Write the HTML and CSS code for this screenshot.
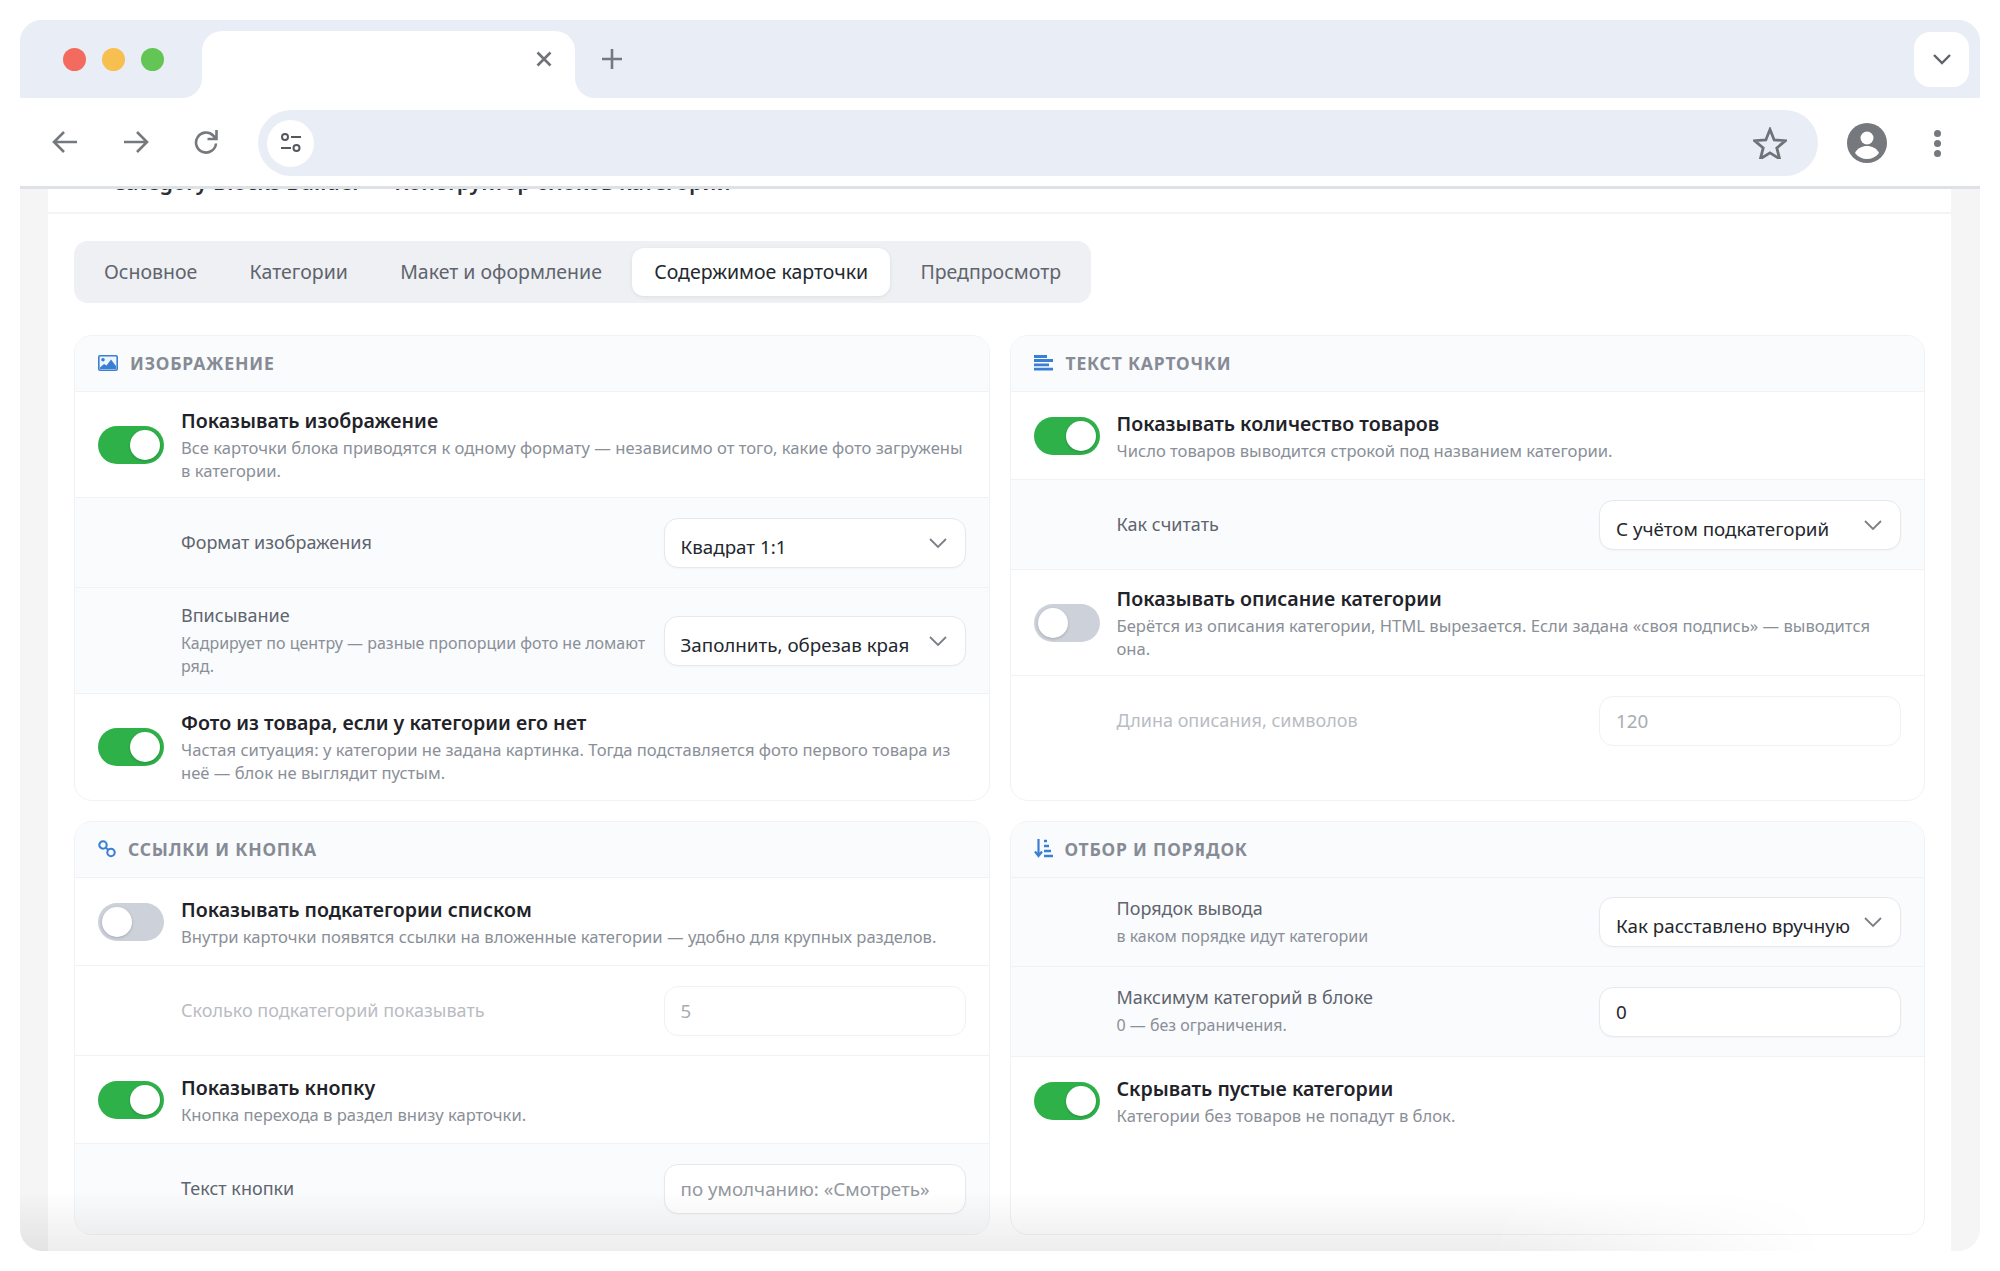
FILE: index.html
```html
<!DOCTYPE html>
<html lang="ru">
<head>
  <meta charset="UTF-8">
  <title>Category Blocks Builder</title>
  <link rel="stylesheet" href="styles.css">
</head>
<body>

  <div class="window">
    <div class="tabstrip">
      <div class="strip-left">
        <span class="dot red"></span>
        <span class="dot yellow"></span>
        <span class="dot green"></span>
      </div>
      <div class="tab">
        <svg class="tab-close" width="16" height="16" viewBox="0 0 16 16"><path d="M1.5 1.5l13 13M14.5 1.5l-13 13" stroke="#6f7277" stroke-width="2.6" fill="none"/></svg>
      </div>
      <div class="strip-right">
        <svg class="tab-plus" width="20" height="20" viewBox="0 0 20 20"><path d="M10 0v20M0 10h20" stroke="#75787d" stroke-width="2.6" fill="none"/></svg>
        <div class="tab-menu">
          <svg width="18" height="11" viewBox="0 0 18 11"><path d="M1 1l8 8 8-8" stroke="#5f6368" stroke-width="2.4" fill="none"/></svg>
        </div>
      </div>
    </div>

    <div class="toolbar">
      <div class="nav-btns">
        <svg width="26" height="24" viewBox="0 0 26 24"><path d="M25 12H3M12 2L2 12l10 10" stroke="#75787d" stroke-width="2.6" fill="none"/></svg>
        <svg width="26" height="24" viewBox="0 0 26 24"><path d="M1 12h22M14 2l10 10-10 10" stroke="#75787d" stroke-width="2.6" fill="none"/></svg>
        <svg class="reload" width="26" height="26" viewBox="0 0 26 26"><path d="M23 14.500a10 10 0 1 1-2.900-8L23 9.500M23.500 1v9h-9" stroke="#75787d" stroke-width="2.600" fill="none"/></svg>
      </div>
      <div class="address">
        <div class="site-info">
          <svg width="22" height="22" viewBox="0 0 22 22"><g stroke="#55585d" stroke-width="2" fill="none"><circle cx="5" cy="5" r="3"/><path d="M11 5h10M1 16h10"/><circle cx="16.5" cy="16" r="3"/></g></svg>
        </div>
        <svg class="star" width="34" height="32" viewBox="0 0 34 32"><path d="M17 2.5l4.2 10.4 11.3.8-8.7 7.2 2.8 10.9L17 25.9 7.4 31.8l2.8-10.9-8.7-7.2 11.3-.8z" stroke="#6f7277" stroke-width="2.8" fill="none"/></svg>
      </div>
      <svg class="avatar" width="40" height="40" viewBox="0 0 40 40"><circle cx="20" cy="20" r="20" fill="#75787d"/><circle cx="20" cy="15" r="6.5" fill="#fff"/><path d="M8 30c2.500-5 7-7 12-7s9.500 2 12 7c-3 4-7.500 6-12 6s-9-2-12-6z" fill="#fff"/></svg>
      <div class="kebab"><span></span><span></span><span></span></div>
    </div>

    <div class="page">
      <div class="page-head">
        <div class="page-title">Category Blocks Builder — Конструктор блоков категории</div>
      </div>

      <div class="page-body">
        <div class="tabs">
          <div class="tab-item">Основное</div>
          <div class="tab-item">Категории</div>
          <div class="tab-item">Макет и оформление</div>
          <div class="tab-item active">Содержимое карточки</div>
          <div class="tab-item">Предпросмотр</div>
        </div>

        <div class="cards">
          <section class="card">
            <div class="card-head">
              <svg width="20" height="16" viewBox="0 0 20 16"><rect x="0.800" y="0.800" width="18.400" height="14.400" rx="1.200" fill="#eef5fd" stroke="#3b7fd4" stroke-width="1.600"/><circle cx="5" cy="4.800" r="1.800" fill="#3b7fd4"/><path d="M2 14v-1.500l4-3.500 2.500 1.500L13 4.500l5 6.500v3z" fill="#3b7fd4"/></svg>
              <span>Изображение</span>
            </div>
            <div class="row">
              <span class="toggle on"></span>
              <div class="row-text">
                <div class="row-title">Показывать изображение</div>
                <div class="row-desc">Все карточки блока приводятся к одному формату — независимо от того, какие фото загружены в категории.</div>
              </div>
            </div>
            <div class="row sub">
              <div class="row-text">
                <div class="row-label">Формат изображения</div>
              </div>
              <div class="select">Квадрат 1:1
                <svg width="18" height="11" viewBox="0 0 18 11"><path d="M1 1l8 8 8-8" stroke="#7b7f86" stroke-width="1.800" fill="none"/></svg>
              </div>
            </div>
            <div class="row sub">
              <div class="row-text">
                <div class="row-label">Вписывание</div>
                <div class="row-desc">Кадрирует по центру — разные пропорции фото не ломают ряд.</div>
              </div>
              <div class="select">Заполнить, обрезав края
                <svg width="18" height="11" viewBox="0 0 18 11"><path d="M1 1l8 8 8-8" stroke="#7b7f86" stroke-width="1.800" fill="none"/></svg>
              </div>
            </div>
            <div class="row">
              <span class="toggle on"></span>
              <div class="row-text">
                <div class="row-title">Фото из товара, если у категории его нет</div>
                <div class="row-desc">Частая ситуация: у категории не задана картинка. Тогда подставляется фото первого товара из неё — блок не выглядит пустым.</div>
              </div>
            </div>
          </section>

          <section class="card">
            <div class="card-head">
              <svg width="20" height="16" viewBox="0 0 20 16"><path d="M0 1.500h13M0 5.500h19M0 9.800h15M0 14.200h19" stroke="#3b7fd4" stroke-width="2.800" fill="none"/></svg>
              <span>Текст карточки</span>
            </div>
            <div class="row">
              <span class="toggle on"></span>
              <div class="row-text">
                <div class="row-title">Показывать количество товаров</div>
                <div class="row-desc">Число товаров выводится строкой под названием категории.</div>
              </div>
            </div>
            <div class="row sub">
              <div class="row-text">
                <div class="row-label">Как считать</div>
              </div>
              <div class="select">С учётом подкатегорий
                <svg width="18" height="11" viewBox="0 0 18 11"><path d="M1 1l8 8 8-8" stroke="#7b7f86" stroke-width="1.800" fill="none"/></svg>
              </div>
            </div>
            <div class="row">
              <span class="toggle"></span>
              <div class="row-text">
                <div class="row-title">Показывать описание категории</div>
                <div class="row-desc">Берётся из описания категории, HTML вырезается. Если задана «своя подпись» — выводится она.</div>
              </div>
            </div>
            <div class="row sub disabled">
              <div class="row-text">
                <div class="row-label">Длина описания, символов</div>
              </div>
              <input class="field" value="120" disabled>
            </div>
          </section>

          <section class="card">
            <div class="card-head">
              <svg width="18" height="18" viewBox="0 0 18 18"><g stroke="#3b7fd4" stroke-width="2.100" fill="none"><circle cx="5" cy="5" r="3.700"/><circle cx="13" cy="12.500" r="3.700"/><path d="M7.500 7.500l3 2.500"/></g></svg>
              <span>Ссылки и кнопка</span>
            </div>
            <div class="row">
              <span class="toggle"></span>
              <div class="row-text">
                <div class="row-title">Показывать подкатегории списком</div>
                <div class="row-desc">Внутри карточки появятся ссылки на вложенные категории — удобно для крупных разделов.</div>
              </div>
            </div>
            <div class="row sub disabled">
              <div class="row-text">
                <div class="row-label">Сколько подкатегорий показывать</div>
              </div>
              <input class="field" value="5" disabled>
            </div>
            <div class="row">
              <span class="toggle on"></span>
              <div class="row-text">
                <div class="row-title">Показывать кнопку</div>
                <div class="row-desc">Кнопка перехода в раздел внизу карточки.</div>
              </div>
            </div>
            <div class="row sub">
              <div class="row-text">
                <div class="row-label">Текст кнопки</div>
              </div>
              <input class="field" placeholder="по умолчанию: «Смотреть»">
            </div>
          </section>

          <section class="card">
            <div class="card-head">
              <svg width="19" height="19" viewBox="0 0 19 19"><path d="M4.500 0v16M1 12.500l3.500 4.500 3.500-4.500" stroke="#3b7fd4" stroke-width="2.200" fill="none"/><path d="M10 2h3M10 7h5M10 12h7M10 17h9" stroke="#3b7fd4" stroke-width="2.400" fill="none"/></svg>
              <span>Отбор и порядок</span>
            </div>
            <div class="row sub">
              <div class="row-text">
                <div class="row-label">Порядок вывода</div>
                <div class="row-desc">в каком порядке идут категории</div>
              </div>
              <div class="select">Как расставлено вручную
                <svg width="18" height="11" viewBox="0 0 18 11"><path d="M1 1l8 8 8-8" stroke="#7b7f86" stroke-width="1.800" fill="none"/></svg>
              </div>
            </div>
            <div class="row sub">
              <div class="row-text">
                <div class="row-label">Максимум категорий в блоке</div>
                <div class="row-desc">0 — без ограничения.</div>
              </div>
              <input class="field" value="0">
            </div>
            <div class="row">
              <span class="toggle on"></span>
              <div class="row-text">
                <div class="row-title">Скрывать пустые категории</div>
                <div class="row-desc">Категории без товаров не попадут в блок.</div>
              </div>
            </div>
          </section>
        </div>
      </div>
    </div>

    <div class="bottom-fade"></div>
  </div>

</body>
</html>
```

FILE: styles.css
```css
* {
  box-sizing: border-box;
}

html, body {
  height: 100%;
}

body {
  margin: 0;
  padding: 20px;
  background: #fff;
  font-family: 'Noto Sans', sans-serif;
  overflow: hidden;
}

.window {
  position: relative;
  height: 1231px;
  display: flex;
  flex-direction: column;
  border-radius: 22px;
  overflow: hidden;
  background: #f5f5f6;
}

/* browser chrome */
.tabstrip {
  display: flex;
  height: 78px;
  flex-shrink: 0;
  background: linear-gradient(#e9edf5 31px, #fff 31px);
}

.strip-left {
  width: 182px;
  display: flex;
  align-items: center;
  gap: 16px;
  padding: 0 0 0 43px;
  background: #e9edf5;
  border-bottom-right-radius: 20px;
}

.dot {
  width: 23px;
  height: 23px;
  border-radius: 50%;
}

.dot.red { background: #f26b5e; }
.dot.yellow { background: #f7bf4f; }
.dot.green { background: #62c554; }

.tab {
  width: 373px;
  margin-top: 11px;
  background: #fff;
  border-radius: 20px 20px 0 0;
  display: flex;
  align-items: center;
  justify-content: flex-end;
  padding: 0 23px 12px 0;
}

.strip-right {
  flex: 1;
  display: flex;
  align-items: center;
  justify-content: space-between;
  padding: 0 11px 0 27px;
  background: #e9edf5;
  border-bottom-left-radius: 20px;
}

.tab-menu {
  width: 55px;
  height: 55px;
  margin-top: 1px;
  background: #fff;
  border-radius: 16px;
  display: flex;
  align-items: center;
  justify-content: center;
}

.toolbar {
  height: 91px;
  flex-shrink: 0;
  display: flex;
  align-items: flex-start;
  background: #fff;
  border-bottom: 3px solid #dfe1e8;
  position: relative;
}

.nav-btns {
  width: 238px;
  height: 88px;
  display: flex;
  align-items: center;
  gap: 45px;
  padding-left: 32px;
}

.reload {
  margin-left: -1px;
}

.address {
  width: 1560px;
  height: 66px;
  margin-top: 12px;
  background: #e9edf5;
  border-radius: 33px;
  display: flex;
  align-items: center;
  justify-content: space-between;
  padding: 0 31px 0 9px;
}

.site-info {
  width: 47px;
  height: 47px;
  background: #fff;
  border-radius: 50%;
  display: flex;
  align-items: center;
  justify-content: center;
}

.avatar {
  margin: 25px 0 0 29px;
}

.kebab {
  margin: 32px 0 0 47px;
  display: flex;
  flex-direction: column;
  gap: 3px;
}

.kebab span {
  width: 7px;
  height: 7px;
  border-radius: 50%;
  background: #75787d;
}

/* page */
.page {
  flex: 1;
  margin: 0 29px 0 28px;
  background: #fff;
  overflow: hidden;
}

.page-head {
  height: 25px;
  overflow: hidden;
  padding-left: 64px;
  border-bottom: 2px solid #f3f4f6;
}

.page-title {
  margin-top: -22px;
  font-size: 21.500px;
  line-height: 30px;
  font-weight: 600;
  color: #2b2f36;
  white-space: nowrap;
}

.page-body {
  padding: 27px 26px 0 26px;
}

.tabs {
  display: inline-flex;
  gap: 8.300px;
  height: 62px;
  padding: 7px 8px;
  margin-bottom: 32px;
  background: #eef0f4;
  border-radius: 14px;
}

.tab-item {
  padding: 0 22px 2px;
  display: flex;
  align-items: center;
  font-size: 19.500px;
  color: #5f646d;
  border-radius: 12px;
}

.tab-item.active {
  background: #fff;
  color: #23272e;
  box-shadow: 0 1px 4px rgba(0, 0, 0, 0.08);
}

.cards {
  display: grid;
  grid-template-columns: 1fr 1fr;
  gap: 20px;
}

.card {
  border: 1px solid #f0f2f5;
  border-radius: 18px;
  overflow: hidden;
  background: #fff;
}

.card-head {
  height: 56px;
  display: flex;
  align-items: center;
  gap: 12px;
  padding: 0 23px 2px;
  background: #f9fbfd;
  border-bottom: 1px solid #f0f2f5;
  font-size: 17.500px;
  font-weight: 700;
  letter-spacing: 0.8px;
  text-transform: uppercase;
  color: #868b95;
}

.row {
  display: flex;
  align-items: center;
  gap: 17px;
  min-height: 88px;
  padding: 15px 23px;
  border-bottom: 1px solid #f0f2f5;
}

.row:last-child {
  border-bottom-color: transparent;
}

.row.sub {
  min-height: 90px;
  gap: 16px;
  padding: 13.500px 23px 13.500px 106px;
  background: #f9fbfd;
}

.card-head + .row.sub {
  min-height: 89px;
}

.row.sub.disabled {
  background: #fff;
}

.row.disabled .row-label {
  color: #b9bcc2;
}

.row-text {
  flex: 1;
  min-width: 0;
}

.row-title {
  font-size: 19.600px;
  line-height: 27px;
  margin-bottom: 2px;
  font-weight: 600;
  color: #1f2329;
}

.row-desc {
  font-size: 16.600px;
  line-height: 23px;
  color: #8a8f98;
}

.row.sub .row-desc {
  font-size: 16px;
}

.row.sub .row-text {
  padding: 1px 0 2px;
}

.row-label {
  font-size: 18px;
  line-height: 25px;
  color: #5f646d;
}

.row-label + .row-desc {
  margin-top: 4px;
}

.toggle {
  position: relative;
  flex-shrink: 0;
  width: 66px;
  height: 38px;
  border-radius: 19px;
  background: #cdd1d9;
}

.toggle::after {
  content: "";
  position: absolute;
  top: 4px;
  left: 4px;
  width: 30px;
  height: 30px;
  border-radius: 50%;
  background: #fff;
  box-shadow: 0 1px 3px rgba(0, 0, 0, 0.2);
}

.toggle.on {
  background: #2fb14a;
}

.toggle.on::after {
  left: 32px;
}

.select, .field {
  flex-shrink: 0;
  width: 302px;
  height: 50px;
  border: 1px solid #e6e8ec;
  border-radius: 14px;
  background: #fff;
  font-family: inherit;
  font-size: 18.800px;
  color: #23272e;
  box-shadow: 0 1px 2px rgba(0, 0, 0, 0.03);
}

.select {
  position: relative;
  padding: 9px 0 0 16px;
  line-height: 38px;
  white-space: nowrap;
}

.select svg {
  position: absolute;
  top: 19px;
  right: 18px;
}

.field {
  padding: 0 16px;
  outline: none;
}

.field::placeholder {
  color: #94989f;
  opacity: 1;
}

.field:disabled {
  color: #a9acb3;
  -webkit-text-fill-color: #a9acb3;
  border-color: #f0f1f4;
  box-shadow: none;
}

/* shadow that fades in over the bottom edge of the window */
.bottom-fade {
  position: absolute;
  left: 0;
  right: 0;
  bottom: 0;
  height: 60px;
  pointer-events: none;
  background: linear-gradient(to top, rgba(0, 0, 0, 0.07), rgba(0, 0, 0, 0));
  -webkit-mask-image: linear-gradient(to right, #000 75%, transparent 92%);
}
```
